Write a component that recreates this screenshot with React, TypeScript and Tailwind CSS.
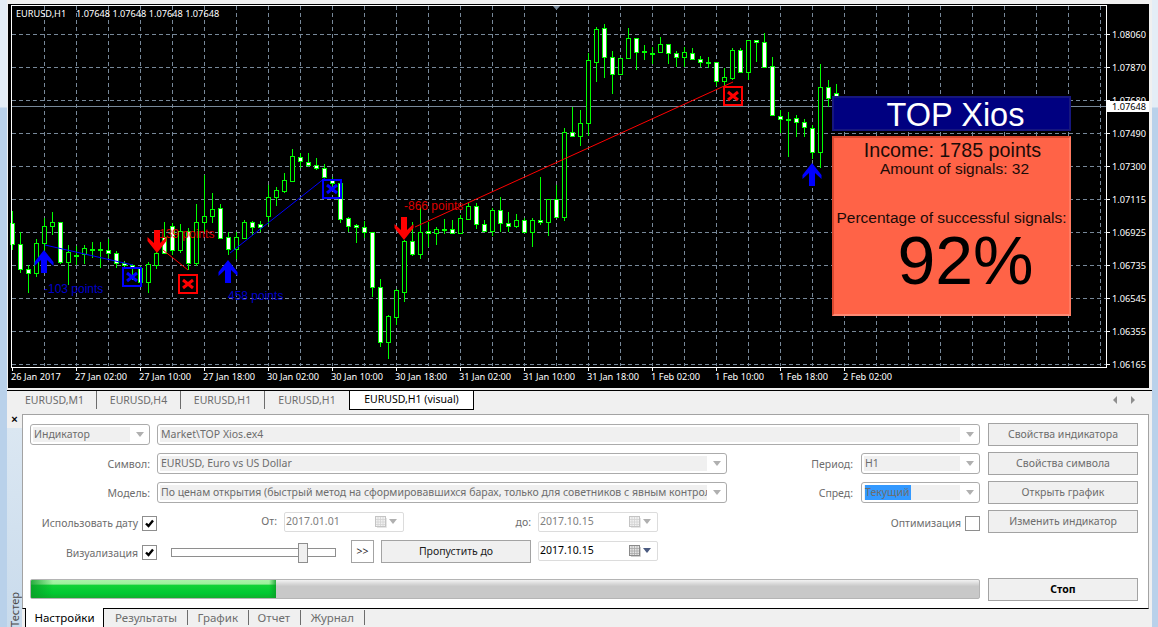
const CANDLES: [number, number, number, number, number][] = [
  [211, 223, 244, 250, 1], [232, 244, 269, 273, 1], [265, 269, 273, 293, 1], [239, 243, 273, 277, 0],
  [218, 226, 243, 253, 0], [212, 222, 226, 235, 0], [222, 222, 262, 264, 1], [245, 252, 262, 285, 0],
  [246, 255, 255, 265, 0], [245, 248, 254, 264, 0], [242, 249, 249, 258, 0], [242, 249, 249, 268, 0],
  [239, 250, 253, 258, 1], [251, 253, 263, 268, 1], [261, 263, 265, 268, 1], [264, 265, 267, 280, 1],
  [266, 268, 282, 282, 1], [262, 264, 282, 293, 0], [240, 253, 265, 269, 0], [222, 237, 253, 253, 1],
  [223, 226, 250, 255, 1], [224, 231, 250, 253, 0], [228, 231, 263, 270, 1], [204, 222, 263, 266, 0],
  [175, 216, 222, 232, 0], [193, 209, 216, 223, 0], [204, 208, 238, 238, 1], [232, 237, 249, 255, 1],
  [232, 237, 249, 259, 0], [220, 222, 238, 238, 0], [221, 222, 227, 235, 1], [221, 224, 227, 232, 1],
  [185, 197, 216, 225, 0], [187, 190, 197, 206, 0], [173, 180, 191, 193, 0], [149, 156, 181, 181, 0],
  [153, 157, 161, 168, 1], [153, 162, 165, 167, 1], [158, 165, 168, 170, 1], [164, 168, 177, 178, 1],
  [177, 180, 183, 190, 1], [183, 183, 219, 223, 1], [217, 218, 226, 232, 1], [224, 225, 227, 243, 1],
  [221, 227, 232, 238, 1], [232, 232, 287, 297, 1], [279, 287, 342, 347, 1], [315, 316, 342, 359, 0],
  [289, 290, 317, 325, 0], [240, 241, 292, 302, 0], [222, 241, 254, 256, 1], [207, 232, 254, 259, 0],
  [222, 231, 233, 247, 1], [227, 229, 233, 245, 0], [219, 229, 229, 234, 0], [220, 229, 233, 234, 1],
  [215, 218, 233, 233, 0], [203, 206, 219, 220, 0], [203, 206, 224, 229, 1], [220, 224, 231, 232, 1],
  [208, 210, 231, 236, 0], [197, 210, 223, 232, 1], [212, 223, 226, 232, 1], [214, 220, 226, 228, 0],
  [218, 220, 232, 233, 1], [218, 220, 232, 247, 0], [177, 220, 222, 225, 1], [199, 199, 222, 236, 0],
  [185, 199, 217, 218, 1], [128, 132, 217, 221, 0], [107, 132, 136, 137, 1], [110, 123, 136, 146, 0],
  [53, 60, 123, 136, 0], [27, 29, 62, 82, 0], [24, 28, 57, 78, 1], [51, 57, 74, 94, 1],
  [58, 58, 74, 75, 0], [28, 38, 58, 59, 0], [38, 38, 52, 70, 1], [45, 51, 52, 60, 0],
  [47, 53, 53, 64, 0], [37, 44, 52, 53, 0], [44, 44, 53, 64, 1], [51, 53, 57, 67, 1],
  [47, 52, 57, 67, 0], [48, 53, 59, 60, 1], [56, 59, 62, 67, 1], [57, 62, 62, 68, 0],
  [62, 62, 81, 86, 1], [68, 77, 81, 90, 0], [48, 50, 78, 80, 0], [48, 50, 72, 73, 1],
  [40, 40, 72, 80, 0], [40, 40, 42, 62, 1], [33, 42, 67, 67, 1], [57, 66, 115, 115, 1],
  [110, 116, 119, 133, 1], [112, 119, 119, 157, 0], [115, 118, 122, 137, 1], [119, 122, 127, 137, 1],
  [125, 128, 152, 159, 1], [64, 87, 152, 168, 0], [80, 87, 98, 107, 1], [84, 93, 96, 100, 1],
]

const PRICES: [number, string][] = [
  [34, '1.08060'], [67, '1.07870'], [100, '1.07680'], [133, '1.07490'], [166, '1.07300'], [199, '1.07115'],
  [232, '1.06925'], [265, '1.06735'], [298, '1.06545'], [331, '1.06355'], [364, '1.06165'],
]

const TIMES = [
  '26 Jan 2017', '27 Jan 02:00', '27 Jan 10:00', '27 Jan 18:00', '30 Jan 02:00', '30 Jan 10:00', '30 Jan 18:00',
  '31 Jan 02:00', '31 Jan 10:00', '31 Jan 18:00', '1 Feb 02:00', '1 Feb 10:00', '1 Feb 18:00', '2 Feb 02:00',
]

const GRID_X = Array.from({ length: 34 }, (_, i) => 44 + i * 32)
const SLATE = '#778899'

function Arrow({ x, y, down }: { x: number; y: number; down?: boolean }) {
  return (
    <polygon
      transform={`translate(${x} ${y})${down ? ' scale(1 -1)' : ''}`}
      points="0,0 9.5,12 9.5,16 3,10 3,23 -3,23 -3,10 -9.5,16 -9.5,12"
      fill={down ? '#ff0000' : '#0000ff'}
    />
  )
}

function Cross({ x, y, color }: { x: number; y: number; color: string }) {
  return (
    <g stroke={color} fill="none">
      <rect x={x - 9} y={y - 9} width={18} height={18} strokeWidth={2} />
      <path d={`M${x - 5} ${y - 4}L${x + 5} ${y + 4}M${x + 5} ${y - 4}L${x - 5} ${y + 4}`} strokeWidth={3} />
    </g>
  )
}

function Chart() {
  return (
    <svg viewBox="8 4 1141 384" width={1141} height={384} className="block">
      <g stroke={SLATE} strokeDasharray="4 3" shapeRendering="crispEdges">
        {GRID_X.map((x) => (
          <line key={x} x1={x + 0.5} x2={x + 0.5} y1={6} y2={366} />
        ))}
        {PRICES.map(([y]) => (
          <line key={y} x1={12} x2={1106} y1={y + 0.5} y2={y + 0.5} />
        ))}
      </g>
      <line x1={12} x2={1106} y1={106.5} y2={106.5} stroke={SLATE} shapeRendering="crispEdges" />
      <polygon points="552,5 561,5 556.5,10" fill={SLATE} />

      <g stroke="#00ff00" shapeRendering="crispEdges">
        {CANDLES.map(([hi, top, bottom, lo, bear], i) => {
          const x = 12 + i * 8
          return (
            <g key={i}>
              <line x1={x + 0.5} x2={x + 0.5} y1={hi} y2={lo} />
              <rect x={x - 1.5} y={top + 0.5} width={4} height={Math.max(bottom - top, 1)} fill={bear ? '#ffffff' : '#000000'} />
            </g>
          )
        })}
      </g>

      <line x1={45} y1={245} x2={133} y2={265} stroke="#0000ff" />
      <line x1={230} y1={253} x2={325} y2={178} stroke="#0000ff" />
      <line x1={163} y1={250} x2={188} y2={270} stroke="#ff0000" />
      <line x1={415} y1={227} x2={733} y2={82} stroke="#ff0000" />

      <Arrow x={44} y={250} />
      <Arrow x={228} y={260} />
      <Arrow x={812} y={163} />
      <Arrow x={157} y={253} down />
      <Arrow x={404} y={240} down />
      <Cross x={132} y={277} color="#0000ff" />
      <Cross x={332} y={189} color="#0000ff" />
      <Cross x={188} y={284} color="#ff0000" />
      <Cross x={733} y={96} color="#ff0000" />

      <g fontSize={12} fontFamily="'Liberation Sans', sans-serif">
        <text x={44} y={293} fill="#0000cd">-103 points</text>
        <text x={228} y={300} fill="#0000cd">458 points</text>
        <text x={159} y={238} fill="#dd0000">139 points</text>
        <text x={404} y={210} fill="#dd0000">-866 points</text>
      </g>

      <path d="M11.5 5.5H1106.5V367.5H11.5Z" fill="none" stroke="#ffffff" shapeRendering="crispEdges" />
      <g stroke="#ffffff" shapeRendering="crispEdges">
        {TIMES.map((_, i) => (
          <line key={i} x1={12.5 + i * 64} x2={12.5 + i * 64} y1={367} y2={371} />
        ))}
        {PRICES.map(([y]) => (
          <line key={y} x1={1106} x2={1110} y1={y + 0.5} y2={y + 0.5} />
        ))}
      </g>
      <g fill="#ffffff" fontSize={9.2} fontFamily="'Noto Sans', sans-serif">
        <text x={16} y={17}>EURUSD,H1</text>
        <text x={76} y={17}>1.07648 1.07648 1.07648 1.07648</text>
        {PRICES.map(([y, label]) => (
          <text key={y} x={1112} y={y + 3.5}>{label}</text>
        ))}
        {TIMES.map((label, i) => (
          <text key={label} x={11 + i * 64} y={380}>{label}</text>
        ))}
      </g>
      <rect x={1107} y={101} width={42} height={11} fill="#ffffff" />
      <text x={1112} y={110} fontSize={9.2} fill="#000000" fontFamily="'Noto Sans', sans-serif">1.07648</text>
    </svg>
  )
}

function Caret({ dark }: { dark?: boolean }) {
  return (
    <svg width={8} height={5} viewBox="0 0 8 5" className="shrink-0">
      <polygon points="0,0 8,0 4,5" fill={dark ? '#4a5a80' : '#b0b0b0'} />
    </svg>
  )
}

function Select({ value, width, selected }: { value: string; width: string; selected?: boolean }) {
  return (
    <div className={`flex h-[21px] shrink-0 items-center overflow-hidden rounded-[3px] border border-[#ababab] bg-white ${width}`}>
      <div className="m-[2px] flex h-[15px] min-w-0 flex-1 items-center overflow-hidden whitespace-nowrap bg-[#f0f0f0] pl-[1px] pt-[1px] text-[#6d6d6d]">
        {selected ? <span className="-mt-[1px] h-[15px] w-[46px] bg-[#3399ff] leading-[14px]">{value}</span> : value}
      </div>
      <div className="flex w-[17px] shrink-0 justify-center pr-[2px]">
        <Caret />
      </div>
    </div>
  )
}

function DateField({ value, active }: { value: string; active?: boolean }) {
  return (
    <div className={`flex h-[20px] w-[120px] shrink-0 items-center rounded-[2px] border border-[#dcdcdc] bg-white pl-[1px] ${active ? 'text-black' : 'text-[#808080]'}`}>
      <span className="flex-1 leading-none">{value}</span>
      <svg width={12} height={12} viewBox="0 0 12 12" className={`mr-[2px] ${active ? '' : 'opacity-50'}`}>
        <rect x={0.5} y={0.5} width={10} height={10} fill="#e4e4e4" stroke="#8a8a8a" />
        <path d="M3 1V10M5.5 1V10M8 1V10M1 3.5H10M1 6H10M1 8.5H10" stroke="#a8a8a8" strokeWidth={0.8} />
        <path d="M11.5 2V11.5H2" fill="none" stroke="#cfcfcf" />
      </svg>
      <div className="mr-[6px]">
        <Caret dark={active} />
      </div>
    </div>
  )
}

function Check({ checked }: { checked?: boolean }) {
  return (
    <div className="h-[15px] w-[15px] shrink-0 border border-[#8e8e8e] bg-white">
      {checked && (
        <svg viewBox="0 0 13 13" width={13} height={13}>
          <path d="M3 6.5L5.5 9L10 3.5" fill="none" stroke="#000000" strokeWidth={2.4} />
        </svg>
      )}
    </div>
  )
}

function Button({ label, strong, dark }: { label: string; strong?: boolean; dark?: boolean }) {
  return (
    <button
      type="button"
      className={`h-[23px] w-[150px] shrink-0 border border-[#a3a3a3] bg-[#f0f0f0] text-center ${strong ? 'font-bold text-black' : dark ? 'text-[#1c1c1c]' : 'text-[#6d6d6d]'}`}
    >
      {label}
    </button>
  )
}

function TesterForm() {
  return (
    <div className="flex h-[195px] border border-b-black border-x-[#a3a3a3] border-t-[#a3a3a3] bg-white pl-[7px] pt-[8px]">
      <div className="flex w-[950px] shrink-0 flex-col pt-[1px] text-[#6d6d6d]">
        <div className="flex h-[21px] items-center gap-[7px]">
          <Select value="Индикатор" width="w-[120px]" />
          <Select value="Market\TOP Xios.ex4" width="flex-1" />
        </div>
        <div className="mt-[8px] flex h-[21px] items-center">
          <span className="mt-[2px] w-[120px] text-right">Символ:</span>
          <div className="ml-[7px]">
            <Select value="EURUSD, Euro vs US Dollar" width="w-[570px]" />
          </div>
          <span className="mt-[2px] flex-1 text-right">Период:</span>
          <div className="ml-[8px]">
            <Select value="H1" width="w-[119px]" />
          </div>
        </div>
        <div className="mt-[8px] flex h-[21px] items-center">
          <span className="mt-[2px] w-[120px] text-right">Модель:</span>
          <div className="ml-[7px]">
            <Select
              value="По ценам открытия (быстрый метод на сформировавшихся барах, только для советников с явным контролем"
              width="w-[570px]"
            />
          </div>
          <span className="mt-[2px] flex-1 text-right">Спред:</span>
          <div className="ml-[8px]">
            <Select value="Текущий" width="w-[119px]" selected />
          </div>
        </div>
        <div className="mt-[8px] flex h-[21px] items-center">
          <span className="mt-[5px] w-[108px] whitespace-nowrap text-right">Использовать дату</span>
          <div className="ml-[4px] mt-[4px]">
            <Check checked />
          </div>
          <span className="w-[120px] text-right">От:</span>
          <div className="ml-[7px]">
            <DateField value="2017.01.01" />
          </div>
          <span className="mt-[2px] w-[127px] text-right">до:</span>
          <div className="ml-[7px]">
            <DateField value="2017.10.15" />
          </div>
          <span className="mt-[5px] flex-1 text-right">Оптимизация</span>
          <div className="ml-[4px] mt-[4px]">
            <Check />
          </div>
        </div>
        <div className="mt-[8px] flex h-[23px] items-center">
          <span className="mt-[4px] w-[108px] text-right">Визуализация</span>
          <div className="ml-[4px] mt-[2px]">
            <Check checked />
          </div>
          <div className="relative ml-[14px] mt-[2px] h-[9px] w-[165px] border border-[#8e8e8e] bg-white">
            <div className="absolute left-[126px] top-[-6px] h-[20px] w-[10px] border border-[#8e8e8e] bg-[#f0f0f0]" />
          </div>
          <div className="ml-[15px] flex h-[23px] w-[23px] items-center justify-center border border-[#a3a3a3] bg-white text-[#1c1c1c]">
            &gt;&gt;
          </div>
          <div className="ml-[7px]">
            <Button label="Пропустить до" dark />
          </div>
          <div className="mb-[2px] ml-[7px]">
            <DateField value="2017.10.15" active />
          </div>
        </div>
        <div className="mt-[16px] h-[20px] overflow-hidden rounded-[2px] border border-[#b4b4b4] bg-[linear-gradient(180deg,#f2f2f2_0%,#dcdcdc_18%,#c8c8c8_35%,#c8c8c8_100%)]">
          <div className="h-full w-[245px] bg-[linear-gradient(90deg,#0a9c26cc_0px,#0a9c2600_22px,#0a9c2600_238px,#0a9c26cc_245px),linear-gradient(180deg,#a8f4a8_0%,#9cf09c_22%,#10d236_30%,#00c832_75%,#10b02c_100%)]" />
        </div>
      </div>
      <div className="ml-[8px] flex w-[150px] shrink-0 flex-col gap-[6px]">
        <Button label="Свойства индикатора" />
        <Button label="Свойства символа" />
        <Button label="Открыть график" />
        <Button label="Изменить индикатор" />
        <div className="mt-[39px]">
          <Button label="Стоп" strong />
        </div>
      </div>
    </div>
  )
}

export default function App() {
  return (
    <div className="flex h-[627px] w-[1158px] overflow-hidden bg-[#f0f0f0] font-['Noto_Sans',sans-serif] text-[10.5px]">
      <div className="w-[7px] shrink-0 bg-[linear-gradient(180deg,#e4edf6_0,#e4edf6_107px,#b9d1ea_108px,#b9d1ea_100%)]" />

      <div className="flex w-[1145px] shrink-0 flex-col">
        <div className="relative ml-[1px] mr-[3px] mt-[4px] h-[384px] shrink-0 bg-black font-['Liberation_Sans',sans-serif]">
          <Chart />
          <div className="absolute left-[824px] top-[92px] flex h-[35px] w-[239px] items-center justify-center border-2 border-[#16167e] bg-[#000080] pl-[8px] pt-[3px] text-[32.5px] leading-none text-white">
            TOP Xios
          </div>
          <div className="absolute left-[824px] top-[132px] flex h-[180px] w-[239px] flex-col items-center border-2 border-b-[#ff8a74] border-l-[#d9482f] border-r-[#ff7a60] border-t-[#d9482f] bg-[#ff6347] text-[15.5px] leading-4 text-[#1b0b08]">
            <span className="ml-[2px] mt-[2px] text-[19.7px] leading-5">Income: 1785 points</span>
            <span className="ml-[6px] mt-px">Amount of signals: 32</span>
            <span className="mt-[33px] whitespace-nowrap">Percentage of successful signals:</span>
            <span className="ml-[28px] -mt-[2px] text-[68px] leading-[72px] text-black">92%</span>
          </div>
        </div>

        <div className="mt-[2px] flex h-[19px] shrink-0 items-start border-t border-black pl-[6px] text-[#6d6d6d]">
          {['EURUSD,M1', 'EURUSD,H4', 'EURUSD,H1', 'EURUSD,H1'].map((tab, i) => (
            <div key={i} className={`flex h-[18px] w-[84px] shrink-0 items-center justify-center ${i < 3 ? 'border-r border-[#6d6d6d]' : ''}`}>
              <span className="leading-[13px]">{tab}</span>
            </div>
          ))}
          <div className="flex h-[19px] w-[125px] shrink-0 items-center justify-center border-x border-b border-black bg-white text-black">
            EURUSD,H1 (visual)
          </div>
          <div className="ml-auto mr-[17px] mt-[5px] flex gap-[14px]">
            <svg width={4} height={8} viewBox="0 0 4 8"><polygon points="4,0 4,8 0,4" fill="#8e8e8e" /></svg>
            <svg width={4} height={8} viewBox="0 0 4 8"><polygon points="0,0 0,8 4,4" fill="#8e8e8e" /></svg>
          </div>
        </div>

        <div className="flex min-h-0 flex-1">
          <div className="flex w-[15px] shrink-0 flex-col items-center bg-[linear-gradient(180deg,#f0f0f0_0,#f0f0f0_19px,#dbe7f2_19px,#c9dbec_100%)]">
            <span className="mt-[3px] font-['Liberation_Sans',sans-serif] text-[11px] font-bold leading-[14px] text-black">×</span>
            <span className="mt-auto rotate-180 text-[11px] leading-[14px] text-[#4a4a4a] [writing-mode:vertical-rl]">Тестер</span>
          </div>
          <div className="w-[1127px] shrink-0 pt-[5px]">
            <TesterForm />
            <div className="-mt-px ml-[3px] flex h-[19px] items-start text-[11.5px] text-[#6d6d6d]">
              <div className="relative flex h-[19px] w-[79px] shrink-0 items-center justify-center border-x border-black bg-white text-black">Настройки</div>
              <span className="mt-[2px] w-[84px] whitespace-nowrap border-r border-[#6d6d6d] pr-[10px] text-right leading-[15px]">Результаты</span>
              <span className="mt-[2px] w-[61px] whitespace-nowrap border-r border-[#6d6d6d] pr-[10px] text-right leading-[15px]">График</span>
              <span className="mt-[2px] w-[52px] whitespace-nowrap border-r border-[#6d6d6d] pr-[10px] text-right leading-[15px]">Отчет</span>
              <span className="mt-[2px] w-[64px] whitespace-nowrap border-r border-[#6d6d6d] pr-[10px] text-right leading-[15px]">Журнал</span>
            </div>
          </div>
        </div>
      </div>

      <div className="w-[6px] shrink-0 bg-[linear-gradient(180deg,#e4edf6_0,#e4edf6_107px,#b9d1ea_108px,#b9d1ea_100%)]" />
    </div>
  )
}
